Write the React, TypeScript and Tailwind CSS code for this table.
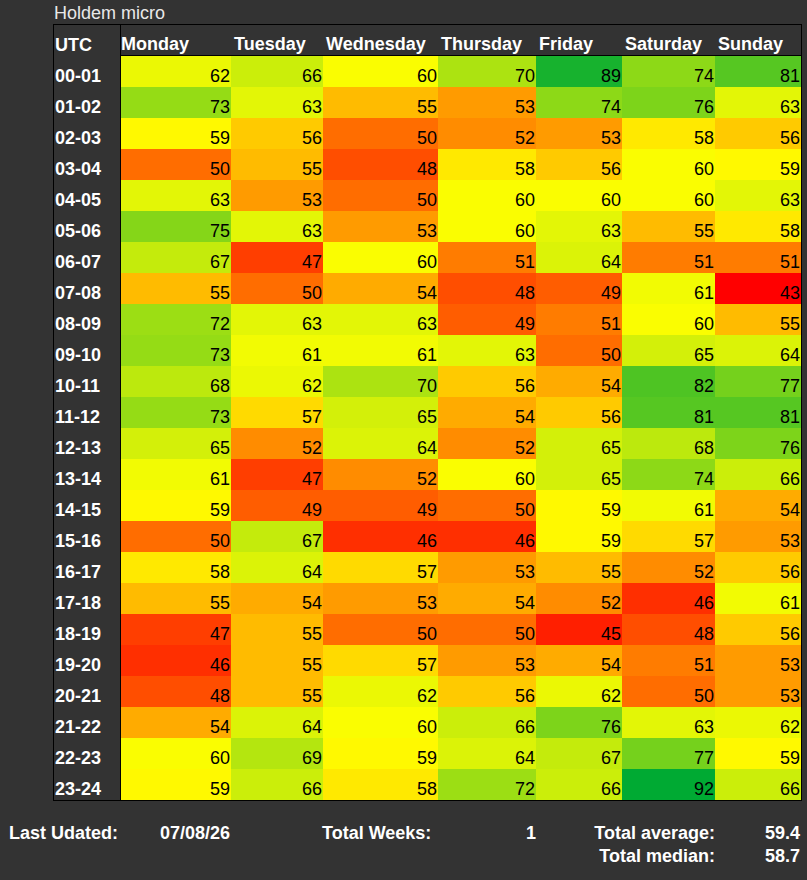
import React from "react";

const days = ["Monday", "Tuesday", "Wednesday", "Thursday", "Friday", "Saturday", "Sunday"];
const widths = ["w-[110px]", "w-[92px]", "w-[115px]", "w-[98px]", "w-[86px]", "w-[93px]", "w-[86px]"];
const headPad = ["pl-0", "pl-[3px]", "pl-[3px]", "pl-[3px]", "pl-[3px]", "pl-[3px]", "pl-[3px]"];

const rows: [string, number[]][] = [
  ["00-01", [62, 66, 60, 70, 89, 74, 81]],
  ["01-02", [73, 63, 55, 53, 74, 76, 63]],
  ["02-03", [59, 56, 50, 52, 53, 58, 56]],
  ["03-04", [50, 55, 48, 58, 56, 60, 59]],
  ["04-05", [63, 53, 50, 60, 60, 60, 63]],
  ["05-06", [75, 63, 53, 60, 63, 55, 58]],
  ["06-07", [67, 47, 60, 51, 64, 51, 51]],
  ["07-08", [55, 50, 54, 48, 49, 61, 43]],
  ["08-09", [72, 63, 63, 49, 51, 60, 55]],
  ["09-10", [73, 61, 61, 63, 50, 65, 64]],
  ["10-11", [68, 62, 70, 56, 54, 82, 77]],
  ["11-12", [73, 57, 65, 54, 56, 81, 81]],
  ["12-13", [65, 52, 64, 52, 65, 68, 76]],
  ["13-14", [61, 47, 52, 60, 65, 74, 66]],
  ["14-15", [59, 49, 49, 50, 59, 61, 54]],
  ["15-16", [50, 67, 46, 46, 59, 57, 53]],
  ["16-17", [58, 64, 57, 53, 55, 52, 56]],
  ["17-18", [55, 54, 53, 54, 52, 46, 61]],
  ["18-19", [47, 55, 50, 50, 45, 48, 56]],
  ["19-20", [46, 55, 57, 53, 54, 51, 53]],
  ["20-21", [48, 55, 62, 56, 62, 50, 53]],
  ["21-22", [54, 64, 60, 66, 76, 63, 62]],
  ["22-23", [60, 69, 59, 64, 67, 77, 59]],
  ["23-24", [59, 66, 58, 72, 66, 92, 66]],
];

function heat(v: number): string {
  if (v <= 59.4) {
    const g = Math.round(Math.max(0, Math.min(255, ((v - 43) / 16.4) * 255)));
    return `rgb(255,${g},0)`;
  }
  const t = Math.min(1, (v - 59.4) / 32.6);
  return `rgb(${Math.round(255 * (1 - t))},${Math.round(255 - 85 * t)},${Math.round(51 * t)})`;
}

export default function App() {
  return (
    <div className="min-h-[880px] w-full bg-[#333333] font-['Liberation_Sans',Arial,sans-serif] text-[18px]">
      <div className="pl-[53px]">
        <div className="pl-[1px] pt-[3px] leading-[21px] text-[#e8e8e8]">Holdem micro</div>
        <div className="w-[749px] border border-black">
          <div className="flex h-[31px]">
            <div className="flex w-[67px] items-end border-r border-black pl-[1px] font-bold leading-[21px] text-white">
              UTC
            </div>
            {days.map((d, i) => (
              <div
                key={d}
                className={`flex h-[31px] items-end border-b border-black font-bold leading-[21px] text-white ${widths[i]} ${headPad[i]}`}
              >
                {d}
              </div>
            ))}
          </div>
          {rows.map(([label, vals]) => (
            <div key={label} className="flex h-[31px]">
              <div className="flex w-[67px] items-end border-r border-black pl-[1px] font-bold leading-[21px] text-white">
                {label}
              </div>
              {vals.map((v, i) => (
                <div
                  key={i}
                  className={`flex h-[31px] items-end justify-end pr-[1px] leading-[21px] text-black ${widths[i]}`}
                  style={{ backgroundColor: heat(v) }}
                >
                  {v}
                </div>
              ))}
            </div>
          ))}
        </div>
      </div>
      <div className="mt-[21px] font-bold leading-[23px] text-white">
        <div className="flex">
          <div className="w-[160px] pl-[9px]">Last Udated:</div>
          <div className="w-[162px]">07/08/26</div>
          <div className="flex w-[214px] justify-between">
            <span>Total Weeks:</span>
            <span>1</span>
          </div>
          <div className="w-[179px] text-right">Total average:</div>
          <div className="w-[85px] text-right">59.4</div>
        </div>
        <div className="flex">
          <div className="w-[536px]" />
          <div className="w-[179px] text-right">Total median:</div>
          <div className="w-[85px] text-right">58.7</div>
        </div>
      </div>
    </div>
  );
}
